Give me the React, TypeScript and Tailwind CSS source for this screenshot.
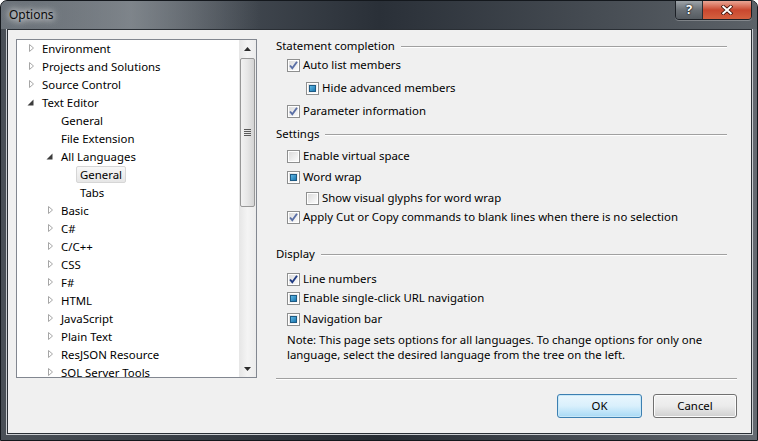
import React from "react";

type CheckState = "on" | "off" | "mixed";

interface TreeItem {
    level: number;
    text: string;
    expand?: "open" | "closed";
    selected?: boolean;
}

const tree: TreeItem[] = [
    { level: 0, text: "Environment", expand: "closed" },
    { level: 0, text: "Projects and Solutions", expand: "closed" },
    { level: 0, text: "Source Control", expand: "closed" },
    { level: 0, text: "Text Editor", expand: "open" },
    { level: 1, text: "General" },
    { level: 1, text: "File Extension" },
    { level: 1, text: "All Languages", expand: "open" },
    { level: 2, text: "General", selected: true },
    { level: 2, text: "Tabs" },
    { level: 1, text: "Basic", expand: "closed" },
    { level: 1, text: "C#", expand: "closed" },
    { level: 1, text: "C/C++", expand: "closed" },
    { level: 1, text: "CSS", expand: "closed" },
    { level: 1, text: "F#", expand: "closed" },
    { level: 1, text: "HTML", expand: "closed" },
    { level: 1, text: "JavaScript", expand: "closed" },
    { level: 1, text: "Plain Text", expand: "closed" },
    { level: 1, text: "ResJSON Resource", expand: "closed" },
    { level: 1, text: "SQL Server Tools", expand: "closed" },
];

const indent = ["pl-[11px]", "pl-[30px]", "pl-[49px]"];

function Expander({ kind }: { kind?: "open" | "closed" }) {
    return (
        <span className="flex w-[14px] shrink-0 items-center">
            {kind === "closed" && (
                <svg width="7" height="10" viewBox="0 0 7 10">
                    <path d="M1.5 1.5 L5.5 5 L1.5 8.5 Z" fill="white" stroke="#a6a6a6" strokeWidth="1" />
                </svg>
            )}
            {kind === "open" && (
                <svg width="7" height="10" viewBox="0 0 7 10" className="-ml-[1px]">
                    <path d="M6.5 2.5 L6.5 8.5 L0.5 8.5 Z" fill="#3c3c3c" />
                </svg>
            )}
        </span>
    );
}

function TreeView() {
    return (
        <div className="mt-[1px] flex h-[339px] w-[241px] shrink-0 border border-[#828790] bg-white">
            <div className="flex-1 overflow-hidden">
                <div className="-mt-[1px]">
                    {tree.map((item, i) => (
                        <div key={i} className={`flex h-[18px] items-center ${indent[item.level]}`}>
                            <Expander kind={item.expand} />
                            <span
                                className={
                                    item.selected
                                        ? "-ml-[4px] rounded-[2px] border border-[#d6d6d6] bg-gradient-to-b from-[#f8f8f8] to-[#e6e6e6] px-[3px] leading-[15px]"
                                        : "-ml-[4px] border border-transparent px-[3px] leading-[15px]"
                                }
                            >
                                {item.text}
                            </span>
                        </div>
                    ))}
                </div>
            </div>
            {/* scrollbar */}
            <div className="flex w-[17px] shrink-0 flex-col bg-gradient-to-r from-[#e6e6e6] via-[#f4f4f4] to-[#ececec]">
                <div className="flex h-[17px] items-center justify-center">
                    <svg width="7" height="4" viewBox="0 0 7 4">
                        <path d="M0 4 L3.5 0 L7 4 Z" fill="#2c2c2c" />
                    </svg>
                </div>
                <div className="mx-[1px] mt-[1px] flex h-[149px] items-center justify-center rounded-[2px] border border-[#979797] bg-gradient-to-r from-[#f2f2f2] via-[#e6e6e6] to-[#d4d4d4]">
                    <div className="flex flex-col gap-[1px]">
                        <span className="block h-[1px] w-[7px] bg-[#5a5a5a]" />
                        <span className="block h-[1px] w-[7px] bg-[#5a5a5a]" />
                        <span className="block h-[1px] w-[7px] bg-[#5a5a5a]" />
                        <span className="block h-[1px] w-[7px] bg-[#5a5a5a]" />
                    </div>
                </div>
                <div className="flex-1" />
                <div className="flex h-[17px] items-center justify-center">
                    <svg width="7" height="4" viewBox="0 0 7 4">
                        <path d="M0 0 L3.5 4 L7 0 Z" fill="#2c2c2c" />
                    </svg>
                </div>
            </div>
        </div>
    );
}

function CheckBox({ state, dark }: { state: CheckState; dark?: boolean }) {
    return (
        <span className="relative flex h-[13px] w-[13px] shrink-0 items-center justify-center border border-[#8e8f8f] bg-white">
            <span className="absolute inset-[1px] bg-gradient-to-br from-[#dcdcdc] to-[#fbfbfb]" />
            {state === "mixed" && (
                <span className="relative h-[7px] w-[7px] border border-[#1d5a84] bg-gradient-to-br from-[#5fb8e4] to-[#1677b0]" />
            )}
            {state === "on" && (
                <svg width="11" height="11" viewBox="0 0 11 11" className="relative">
                    <path
                        d="M2 5.5 L4.3 8.2 L9 1.8"
                        fill="none"
                        stroke={dark ? "#1f3a83" : "#5a6fa6"}
                        strokeWidth="1.9"
                    />
                </svg>
            )}
        </span>
    );
}

function Option({
    label,
    state,
    nested,
    dark,
    className,
}: {
    label: string;
    state: CheckState;
    nested?: boolean;
    dark?: boolean;
    className?: string;
}) {
    return (
        <div className={`flex h-[16px] items-center gap-[3px] ${nested ? "pl-[30px]" : "pl-[11px]"} ${className ?? ""}`}>
            <CheckBox state={state} dark={dark} />
            <span className="whitespace-nowrap leading-[16px]">{label}</span>
        </div>
    );
}

function Heading({ title, className }: { title: string; className?: string }) {
    return (
        <div className={`flex h-[16px] items-center gap-[6px] pr-[10px] ${className ?? ""}`}>
            <span className="whitespace-nowrap leading-[16px]">{title}</span>
            <span className="h-[1px] flex-1 bg-[#a0a0a0] shadow-[0_1px_0_#ffffff]" />
        </div>
    );
}

function Button({ label, isDefault }: { label: string; isDefault?: boolean }) {
    return (
        <button
            type="button"
            className={
                isDefault
                    ? "flex h-[24px] w-[85px] items-center justify-center rounded-[3px] border border-[#3c7fb1] bg-gradient-to-b from-[#eaf6fd] via-[#d9f0fc] to-[#a7d9f5] shadow-[inset_0_0_0_1px_#c8e8f8]"
                    : "flex h-[24px] w-[84px] items-center justify-center rounded-[3px] border border-[#707070] bg-gradient-to-b from-[#f2f2f2] via-[#ebebeb] to-[#cfcfcf] shadow-[inset_0_0_0_1px_#fcfcfc]"
            }
        >
            {label}
        </button>
    );
}

export default function App() {
    return (
        <div
            className="flex h-[441px] w-[758px] flex-col overflow-hidden rounded-t-[7px] border border-[#14181d] bg-gradient-to-r from-[#4a5057] via-[#262c33] to-[#656a71] text-[11.4px] text-black"
            style={{ fontFamily: '"Segoe UI", "Noto Sans", "Open Sans", sans-serif' }}
        >
            {/* title bar */}
            <div className="relative flex h-[28px] shrink-0 items-center bg-gradient-to-r from-[#6c737a] via-[#2a3038] to-[#5c6268]">
                <div className="absolute inset-y-0 left-0 w-[260px] bg-gradient-to-r from-transparent via-[#9aa0a5]/60 to-transparent" />
                <span className="relative pl-[8px] text-[12px] text-[#0c0c0c] [text-shadow:0_0_6px_#ffffff,0_0_10px_#ffffff]">
                    Options
                </span>
                <div className="absolute right-[5px] top-[-1px] flex h-[20px] overflow-hidden rounded-b-[4px] border border-[#1c2026] shadow-[0_1px_0_rgba(255,255,255,0.25)]">
                    <div className="flex w-[27px] items-center justify-center border-r border-[#2a2e33] bg-gradient-to-b from-[#9ea4a9] via-[#6b7177] to-[#555b61] text-[13px] font-bold text-white [text-shadow:0_0_2px_#000,0_0_1px_#000]">
                        ?
                    </div>
                    <div className="flex w-[48px] items-center justify-center bg-gradient-to-b from-[#e9a595] via-[#c9472f] to-[#d4603f]">
                        <svg width="12" height="10" viewBox="0 0 12 10">
                            <path d="M1 0.5 L11 9.5 M11 0.5 L1 9.5" stroke="#3d1208" strokeWidth="3.6" />
                            <path d="M1.5 1 L10.5 9 M10.5 1 L1.5 9" stroke="white" strokeWidth="2" />
                        </svg>
                    </div>
                </div>
            </div>

            {/* client area */}
            <div className="ml-[6px] mr-[5px] h-[405px] shrink-0 border border-[#2a2f35] bg-[#f0f0f0] shadow-[0_0_0_1px_#c9ccd0]">
                <div className="flex pl-[8px] pt-[8px]">
                    <TreeView />
                    <div className="ml-[19px] flex w-[461px] flex-col">
                        <Heading title="Statement completion" />
                        <Option className="mt-[3px]" label="Auto list members" state="on" />
                        <Option className="mt-[7px]" label="Hide advanced members" state="mixed" nested />
                        <Option className="mt-[7px]" label="Parameter information" state="on" />
                        <Heading className="mt-[7px]" title="Settings" />
                        <Option className="mt-[6px]" label="Enable virtual space" state="off" />
                        <Option className="mt-[5px]" label="Word wrap" state="mixed" />
                        <Option className="mt-[5px]" label="Show visual glyphs for word wrap" state="off" nested />
                        <Option
                            className="mt-[3px]"
                            label="Apply Cut or Copy commands to blank lines when there is no selection"
                            state="on"
                        />
                        <Heading className="mt-[21px]" title="Display" />
                        <Option className="mt-[9px]" label="Line numbers" state="on" dark />
                        <Option className="mt-[3px]" label="Enable single-click URL navigation" state="mixed" />
                        <Option className="mt-[5px]" label="Navigation bar" state="mixed" />
                        <p className="mt-[5px] pl-[11px] pr-[20px] leading-[15px]">
                            Note: This page sets options for all languages. To change options for only one
                            language, select the desired language from the tree on the left.
                        </p>
                        <div className="mt-[16px] h-[1px] bg-[#a0a0a0] shadow-[0_1px_0_#ffffff]" />
                        <div className="mt-[15px] flex justify-end gap-[11px]">
                            <Button label="OK" isDefault />
                            <Button label="Cancel" />
                        </div>
                    </div>
                </div>
            </div>
        </div>
    );
}
